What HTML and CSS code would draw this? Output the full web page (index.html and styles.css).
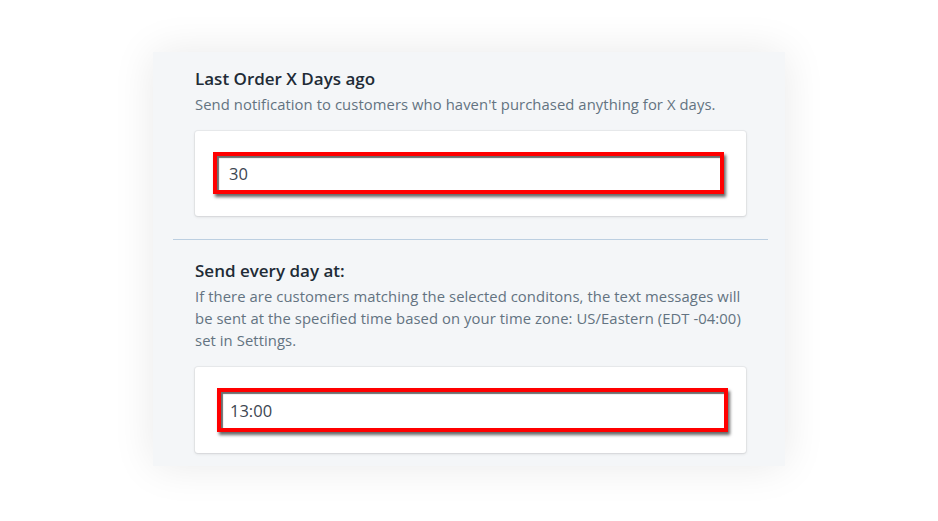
FILE: index.html
```html
<!DOCTYPE html>
<html>
<head>
<meta charset="utf-8">
<link rel="stylesheet" href="styles.css">
</head>
<body>
<div class="panel">
  <section class="section first">
    <h2 class="title">Last Order X Days ago</h2>
    <p class="desc">Send notification to customers who haven't purchased anything for X days.</p>
    <div class="card">
      <div class="field field-a">30</div>
    </div>
  </section>
  <div class="divider"></div>
  <section class="section second">
    <h2 class="title">Send every day at:</h2>
    <p class="desc">If there are customers matching the selected conditons, the text messages will be sent at the specified time based on your time zone: US/Eastern (EDT -04:00) set in Settings.</p>
    <div class="card">
      <div class="field field-b">13:00</div>
    </div>
  </section>
</div>
</body>
</html>
```
FILE: styles.css
```css
html, body {
  margin: 0;
  padding: 0;
  background: #ffffff;
}
body {
  font-family: "Open Sans", "Noto Sans", sans-serif;
  padding-top: 52px;
  padding-left: 153px;
  height: 521px;
  box-sizing: border-box;
  overflow: hidden;
}
.panel {
  width: 632px;
  height: 414px;
  box-sizing: border-box;
  background: #f4f6f8;
  box-shadow: 0 0 40px rgba(0, 0, 0, 0.09);
  padding: 0 17px 0 20px;
}
.section {
  padding: 0 22px;
}
.section.first {
  padding-top: 15px;
}
.section.second {
  padding-top: 19px;
}
.title {
  margin: 0;
  font-size: 17px;
  font-weight: 600;
  color: #212b36;
  line-height: 24px;
}
.desc {
  margin: 2px 0 0 0;
  font-size: 14.8px;
  letter-spacing: 0.08px;
  color: #637381;
  line-height: 22px;
}
.card {
  background: #ffffff;
  border-radius: 3px;
  box-shadow: 0 0 0 1px rgba(63, 63, 68, 0.05), 0 1px 3px rgba(63, 63, 68, 0.15);
  margin-top: 16px;
  padding: 21px 22px 22px 18px;
}
.second .card {
  margin-top: 16px;
  padding: 21px 18px 21px 22px;
}
.field {
  height: 42px;
  box-sizing: border-box;
  border: 4px solid #ff0000;
  background: #ffffff;
  box-shadow: inset 2px 2px 1px rgba(60, 60, 60, 0.75), 2px 3px 3px rgba(0, 0, 0, 0.6);
  font-size: 16.5px;
  color: #3d4651;
  padding-left: 12px;
  display: flex;
  align-items: center;
}
.field-b {
  height: 44px;
  padding-left: 9px;
}
.divider {
  height: 1px;
  background: #bccfe1;
  margin-top: 23px;
}
```
